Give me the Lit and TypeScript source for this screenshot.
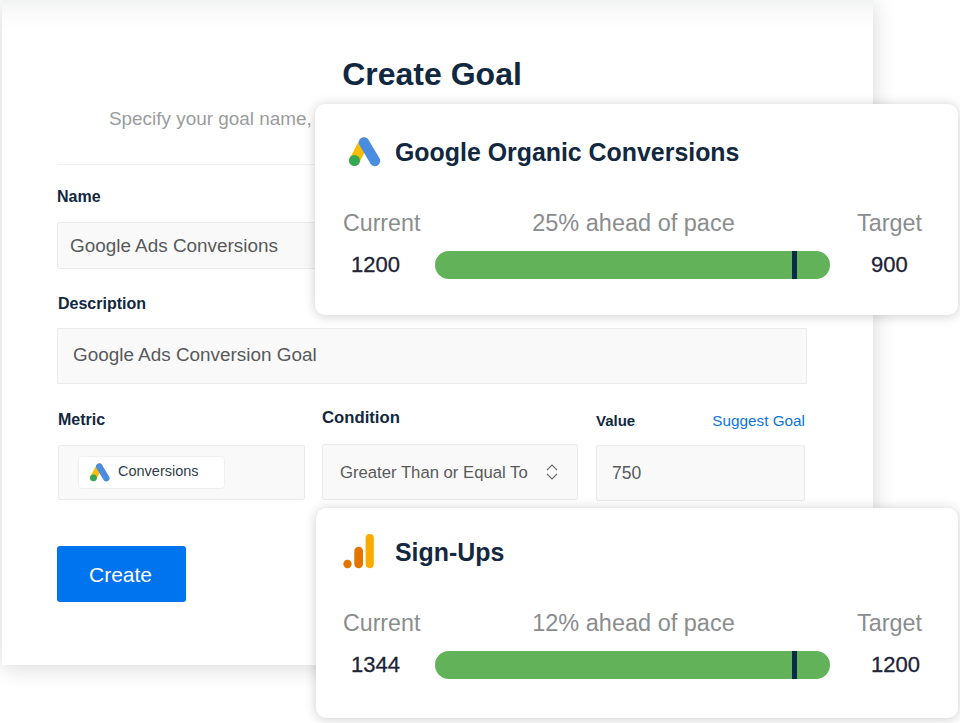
import { LitElement, html, css } from "lit";
import { customElement, property } from "lit/decorators.js";

const adsIcon = (cls: string) => html`<svg class=${cls} viewBox="0 0 32 30" aria-hidden="true">
  <path d="M15 5.5 5.5 23.5" stroke="#fbbc04" stroke-width="10.4" stroke-linecap="round" fill="none"/>
  <path d="M15 5.5 26 24" stroke="#4a8de0" stroke-width="10.4" stroke-linecap="round" fill="none"/>
  <circle cx="5.5" cy="23.5" r="5.5" fill="#34a853"/>
</svg>`;

const analyticsIcon = html`<svg class="icon-lg" viewBox="0 0 32 36" aria-hidden="true">
  <circle cx="4.5" cy="30" r="4.2" fill="#e37400"/>
  <rect x="11.3" y="12.7" width="8.7" height="21.5" rx="4.3" fill="#e37400"/>
  <rect x="22.6" y="0" width="8.2" height="34.2" rx="4.1" fill="#f9ab00"/>
</svg>`;

@customElement("goal-card")
class GoalCard extends LitElement {
  @property() heading = "";
  @property() pace = "";
  @property() current = "";
  @property() target = "";
  static styles = css`
    :host { display: block; height: 100%; box-sizing: border-box; padding: 28px 36px 0 28px; font-family: "Liberation Sans", Arial, sans-serif; }
    .head { display: flex; align-items: center; gap: 20px; height: 40px; }
    h2 { margin: 0; font-size: 24.9px; font-weight: 700; color: #12283f; white-space: nowrap; }
    .stats { display: grid; grid-template-columns: 92px 395px 1fr; margin-top: 36px; align-items: center; }
    .lab { font-size: 23.2px; line-height: 30px; color: #8a8c8e; white-space: nowrap; }
    .pace { font-size: 23.5px; text-align: center; padding-left: 2px; }
    .tgt { font-size: 23.4px; padding-left: 27px; }
    .val { font-size: 22px; line-height: 28px; color: #1b2438; margin-top: 13px; -webkit-text-stroke: 0.3px #1b2438; }
    .cur { padding-left: 8px; }
    .tv { padding-left: 41px; }
    .bar { height: 28px; margin-top: 13px; border-radius: 14px; background: #62b259; position: relative; }
    .mark { position: absolute; left: 357px; top: 0; bottom: 0; width: 5px; background: #0b2c45; }
  `;
  render() {
    return html`
      <div class="head"><slot></slot><h2>${this.heading}</h2></div>
      <div class="stats">
        <div class="lab">Current</div>
        <div class="lab pace">${this.pace}</div>
        <div class="lab tgt">Target</div>
        <div class="val cur">${this.current}</div>
        <div class="bar"><div class="mark"></div></div>
        <div class="val tv">${this.target}</div>
      </div>`;
  }
}

@customElement("app-root")
class AppRoot extends LitElement {
  static styles = css`
    :host { display: block; position: relative; width: 960px; height: 723px; overflow: hidden; background: #fff; font-family: "Liberation Sans", Arial, sans-serif; }
    .panel { width: 871px; height: 665px; margin-left: 2px; box-sizing: border-box; padding: 50px 66px 0 55px;
      background: linear-gradient(#f1f2f2 0, #fafafa 12px, #fff 30px); box-shadow: 0 2px 22px rgba(0,0,0,.16); }
    h1 { margin: 0; height: 48px; line-height: 76px; margin-top: -14px; font-size: 32px; font-weight: 700; color: #12283f; text-align: center; padding-bottom: 14px; }
    .sub { margin: 0; padding-left: 52px; font-size: 18.9px; line-height: 24px; color: #9a9c9e; white-space: nowrap; margin-top: 9px; }
    hr { border: 0; border-top: 1px solid #f1f1f1; margin: 33px 0 0; }
    label, .lbl { display: block; font-size: 16px; font-weight: 700; line-height: 18px; color: #12283f; }
    .field { box-sizing: border-box; display: flex; align-items: center; background: #f9f9f9; border: 1px solid #ebebeb; border-radius: 2px; font-size: 18.9px; color: #58595b; white-space: nowrap; }
    .name { margin-top: 23px; }
    .name .field { height: 47px; margin-top: 16px; padding: 1px 0 0 12px; }
    .desc { margin-top: 26px; padding-left: 1px; }
    .desc .field { height: 56px; margin: 15px 0 0 -1px; padding: 0 0 2px 15px; }
    .row { display: flex; margin-top: 27px; }
    .metric { width: 247px; margin-left: 1px; }
    .metric .field { height: 55px; margin-top: 16px; padding-left: 19px; }
    .chip { display: flex; align-items: center; gap: 8px; box-sizing: border-box; width: 147px; height: 33px; padding-left: 11px; background: #fff; border: 1px solid #f0f0f0; border-radius: 4px; font-size: 14.5px; color: #2c3e50; }
    .chip span { padding-bottom: 3px; }
    .icon-sm { width: 20px; height: 19px; }
    .cond { width: 256px; margin-left: 17px; margin-top: -2px; }
    .cond label { font-size: 16.7px; }
    .cond .field { height: 56px; margin-top: 17px; padding: 2px 0 0 17px; font-size: 16.7px; gap: 18px; }
    .chev { width: 12px; height: 16px; margin-bottom: 2px; }
    .value { width: 209px; margin-left: 18px; margin-top: 1px; }
    .vhead { display: flex; justify-content: space-between; }
    .vhead .lbl { font-size: 15px; }
    .link { color: #0a76d8; font-size: 15.3px; line-height: 18px; }
    .value .field { height: 56px; margin-top: 15px; padding-left: 15px; font-size: 17.5px; }
    .btn { display: block; width: 129px; height: 56px; margin-top: 45px; padding: 2px 2px 0 0; border: 0; border-radius: 3px; background: #0073ee; color: #fff; font: 21px "Liberation Sans", Arial, sans-serif; }
    .card { position: absolute; background: #fff; border-radius: 10px; box-shadow: 0 1px 12px rgba(0,0,0,.2); }
    .c1 { left: 315px; top: 104px; width: 643px; height: 211px; }
    .c2 { left: 316px; top: 508px; width: 642px; height: 210px; }
    .c2 goal-card { margin-left: -1px; padding-top: 24px; }
    .icon-lg { display: block; width: 32px; height: 36px; }
    .icon-ads { display: block; width: 32px; height: 30px; margin-left: 6px; margin-right: -6px; }
  `;
  render() {
    return html`
      <main class="panel">
        <h1>Create Goal</h1>
        <p class="sub">Specify your goal name, description, metric and target value for this goal.</p>
        <hr />
        <div class="name"><label>Name</label><div class="field">Google Ads Conversions</div></div>
        <div class="desc"><label>Description</label><div class="field">Google Ads Conversion Goal</div></div>
        <div class="row">
          <div class="metric"><label>Metric</label>
            <div class="field"><div class="chip">${adsIcon("icon-sm")}<span>Conversions</span></div></div>
          </div>
          <div class="cond"><label>Condition</label>
            <div class="field">Greater Than or Equal To
              <svg class="chev" viewBox="0 0 12 16" fill="none" stroke="#6b6d70" stroke-width="1.1" aria-hidden="true"><path d="M1 6 6 1l5 5M1 10l5 5 5-5"/></svg>
            </div>
          </div>
          <div class="value">
            <div class="vhead"><span class="lbl">Value</span><span class="link">Suggest Goal</span></div>
            <div class="field">750</div>
          </div>
        </div>
        <button class="btn">Create</button>
      </main>
      <section class="card c1">
        <goal-card heading="Google Organic Conversions" pace="25% ahead of pace" current="1200" target="900">${adsIcon("icon-ads")}</goal-card>
      </section>
      <section class="card c2">
        <goal-card heading="Sign-Ups" pace="12% ahead of pace" current="1344" target="1200">${analyticsIcon}</goal-card>
      </section>`;
  }
}
